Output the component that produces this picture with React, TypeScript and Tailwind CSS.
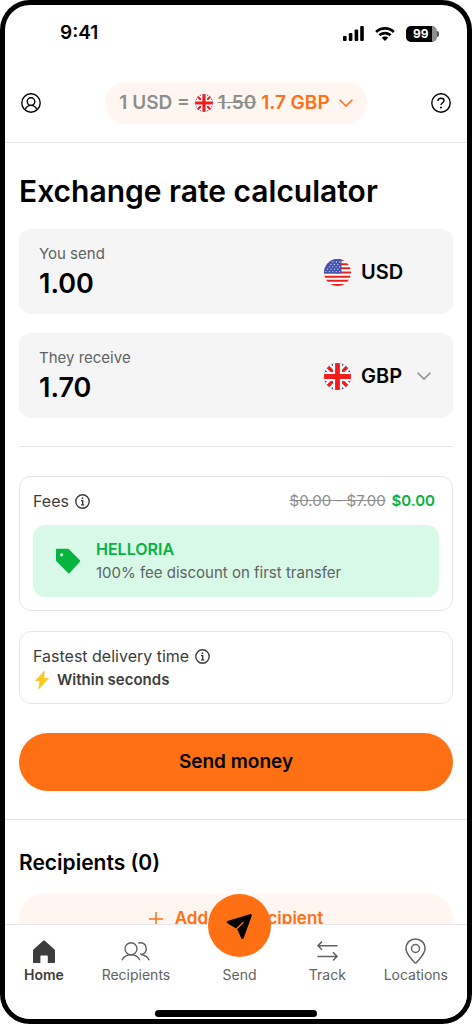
import type { ReactNode } from 'react';

type Flag = 'us' | 'gb';

const TABS = [
  { id: 'home', label: 'Home', icon: <HomeIcon /> },
  { id: 'recipients', label: 'Recipients', icon: <PeopleIcon /> },
  { id: 'send', label: 'Send', icon: null },
  { id: 'track', label: 'Track', icon: <TrackIcon /> },
  { id: 'locations', label: 'Locations', icon: <PinIcon /> },
];

export default function App() {
  return (
    <div className="flex h-screen flex-col overflow-hidden rounded-[30px] border-[5px] border-black bg-white font-['Inter',sans-serif] text-black">
      <StatusBar />
      <Header />
      <main className="min-h-0 flex-1 overflow-y-auto [scrollbar-width:none]">
        <section className="px-3.5 pt-7 pb-7">
          <h1 className="text-[30px] leading-10 font-semibold">Exchange rate calculator</h1>

          <div className="mt-[18px] flex flex-col gap-[19px]">
            <AmountCard id="send" label="You send" value="1.00" flag="us">
              <span className="text-xl font-semibold">USD</span>
            </AmountCard>
            <AmountCard id="receive" label="They receive" value="1.70" flag="gb">
              <div className="relative flex-1">
                <select
                  aria-label="Receive currency"
                  className="w-full appearance-none bg-transparent text-xl font-semibold outline-none"
                >
                  <option>GBP</option>
                </select>
                <Chevron className="pointer-events-none absolute top-1/2 right-0 h-2 w-3.5 -translate-y-1/2 text-[#8c8c8c]" />
              </div>
            </AmountCard>
          </div>

          <hr className="mt-7 mb-[29px] border-[#e6e6e6]" />

          <div className="rounded-xl border border-[#e6e6e6] px-[13px] pt-3 pb-[13px]">
            <div className="flex items-center justify-between pr-1">
              <span className="flex items-center gap-1.5 text-base text-[#3d3d3d]">
                Fees <InfoIcon />
              </span>
              <span className="flex gap-1.5 text-[15px] leading-6">
                <s className="text-[#8c8f8e]">$0.00 - $7.00</s>
                <span className="font-semibold text-[#06b341]">$0.00</span>
              </span>
            </div>
            <div className="mt-3 flex items-center gap-[15px] rounded-xl bg-[#d8f8e8] px-[22px] py-[13px]">
              <TagIcon />
              <div className="text-[15px] leading-[23px] text-[#5f6361]">
                <div className="text-base leading-[23px] font-semibold text-[#06b341]">HELLORIA</div>
                <div>100% fee discount on first transfer</div>
              </div>
            </div>
          </div>

          <div className="mt-5 rounded-xl border border-[#e6e6e6] px-[13px] pt-3 pb-[11px] text-[#3d3d3d]">
            <div className="flex items-center gap-1.5 text-base">
              Fastest delivery time <InfoIcon />
            </div>
            <div className="flex items-center gap-1.5 text-[15px] leading-6 font-semibold">
              <BoltIcon /> Within seconds
            </div>
          </div>

          <button type="button" className="mt-[29px] h-[58px] w-full rounded-full bg-[#ff6f14] text-[19px] font-semibold">
            Send money
          </button>
        </section>

        <section className="border-t border-[#e6e6e6] px-3.5 pt-7">
          <h2 className="text-[21px] leading-[30px] font-semibold">Recipients (0)</h2>
          <button
            type="button"
            className="mt-4 flex h-[50px] w-full items-center justify-center gap-3 rounded-full bg-[#fff6f1] text-[17px] font-semibold text-[#ff6f14]"
          >
            <svg viewBox="0 0 14 14" className="size-3.5" fill="none" stroke="currentColor" strokeWidth="1.5">
              <path d="M7 0v14M0 7h14" />
            </svg>
            Add new recipient
          </button>
        </section>
      </main>
      <TabBar />
    </div>
  );
}

function StatusBar() {
  return (
    <div className="flex h-[57px] items-center justify-between pr-7 pl-[55px]">
      <span className="text-[19px] font-semibold">9:41</span>
      <div className="flex items-center gap-[11px]">
        <svg viewBox="0 0 21 15" className="h-[15px] w-[21px]">
          <rect x="0" y="10" width="3.6" height="5" rx="1" />
          <rect x="5.8" y="7" width="3.6" height="8" rx="1" />
          <rect x="11.6" y="3.4" width="3.6" height="11.6" rx="1" />
          <rect x="17.2" y="0" width="3.6" height="15" rx="1" />
        </svg>
        <svg viewBox="0 0 20 14" className="h-3.5 w-5">
          <path d="M10 0C6.2 0 2.7 1.500.2 3.900l1.900 2C4.200 4 7 2.800 10 2.800s5.800 1.200 7.900 3.100l1.900-2C17.300 1.500 13.800 0 10 0z" />
          <path d="M10 4.800c-2.500 0-4.800 1-6.500 2.500l1.900 2C6.600 8.200 8.200 7.500 10 7.500s3.400.7 4.600 1.800l1.900-2C14.800 5.800 12.500 4.800 10 4.800z" />
          <path d="M10 9.400c-1.300 0-2.400.5-3.200 1.300L10 14l3.200-3.300c-.8-.8-1.900-1.300-3.200-1.300z" />
        </svg>
        <div className="flex items-center">
          <span className="flex h-4 w-[31px] items-center rounded-[5px] border-r-[5px] border-[#8f8f8f] bg-black pl-[7px] text-[12px] leading-none font-bold text-white">
            99
          </span>
          <span className="h-1.5 w-0.5 rounded-r-full bg-[#555]" />
        </div>
      </div>
    </div>
  );
}

function Header() {
  return (
    <header className="flex items-center justify-between border-b border-[#e6e6e6] px-4 pt-5 pb-[18px]">
      <button type="button" aria-label="Profile">
        <svg viewBox="0 0 20 20" className="size-5" fill="none" stroke="currentColor" strokeWidth="1.4">
          <circle cx="10" cy="10" r="9.2" />
          <circle cx="10" cy="8.6" r="3.8" />
          <path d="M4.200 16.600c1-2.600 3-4.200 5.800-4.200s4.800 1.600 5.800 4.200" />
        </svg>
      </button>
      <button
        type="button"
        className="flex h-[42px] items-center gap-[5px] rounded-full bg-[#fff6f1] px-3.5 text-[19px] font-semibold text-[#8c8f8e]"
      >
        1 USD =
        <FlagIcon flag="gb" className="size-[18px]" />
        <s>1.50</s>
        <span className="text-[#ff6f14]">1.7 GBP</span>
        <Chevron className="ml-1 h-2 w-3.5 text-[#ff6f14]" />
      </button>
      <button type="button" aria-label="Help">
        <svg viewBox="0 0 20 20" className="size-5" fill="none" stroke="currentColor" strokeWidth="1.4">
          <circle cx="10" cy="10" r="9.2" />
          <path d="M7 8c0-1.800 1.300-2.800 3-2.800s3 1 3 2.600c0 2-3 2-3 4.300" />
          <circle cx="10" cy="14.6" r="1" fill="currentColor" stroke="none" />
        </svg>
      </button>
    </header>
  );
}

function AmountCard({
  id,
  label,
  value,
  flag,
  children,
}: {
  id: string;
  label: string;
  value: string;
  flag: Flag;
  children: ReactNode;
}) {
  return (
    <div className="flex items-center justify-between rounded-xl bg-[#f5f5f5] pt-[13px] pr-[22px] pb-3 pl-5">
      <div className="flex min-w-0 flex-1 flex-col">
        <label htmlFor={id} className="text-[15px] leading-6 text-[#5f6361]">
          {label}
        </label>
        <input
          id={id}
          defaultValue={value}
          inputMode="decimal"
          className="h-9 w-full bg-transparent text-[27px] leading-9 font-semibold outline-none"
        />
      </div>
      <div className="flex w-[107px] items-center gap-2.5">
        <FlagIcon flag={flag} className="size-[27px] shrink-0" />
        {children}
      </div>
    </div>
  );
}

function TabBar() {
  return (
    <nav className="border-t border-[#e6e6e6] bg-white">
      <div className="flex justify-between px-[19px] pt-3">
        {TABS.map((t) =>
          t.id === 'send' ? (
            <a key={t.id} href="#send" className="relative flex w-[63px] flex-col items-center pt-7 text-sm text-[#5f6361]">
              <span className="absolute -top-[43px] flex size-[63px] items-center justify-center rounded-full bg-[#ff6f14] text-black">
                <PlaneIcon />
              </span>
              {t.label}
            </a>
          ) : (
            <a
              key={t.id}
              href={`#${t.id}`}
              className={`flex flex-col items-center text-sm ${
                t.id === 'home' ? 'font-semibold text-[#3d3d3d]' : 'text-[#5f6361]'
              }`}
            >
              <span className="flex h-7 items-center">{t.icon}</span>
              {t.label}
            </a>
          ),
        )}
      </div>
      <div className="mx-auto mt-[25px] mb-0.5 h-[7px] w-[162px] rounded-full bg-black" />
    </nav>
  );
}

function Chevron({ className }: { className: string }) {
  return (
    <svg viewBox="0 0 14 8" className={className} fill="none" stroke="currentColor" strokeWidth="1.6">
      <path d="M.6.7 7 7 13.400.7" />
    </svg>
  );
}

function InfoIcon() {
  return (
    <svg viewBox="0 0 15 15" className="size-[15px]" fill="none" stroke="currentColor" strokeWidth="1.4">
      <circle cx="7.5" cy="7.5" r="6.7" />
      <path d="M6 6.600h1.700v4.200M6 10.900h3.200" />
      <circle cx="7.4" cy="4.2" r=".9" fill="currentColor" stroke="none" />
    </svg>
  );
}

function TagIcon() {
  return (
    <svg viewBox="0 0 26 26" className="size-[26px] shrink-0 text-[#06b341]" fill="currentColor">
      <path
        fillRule="evenodd"
        d="M2 .8h10.600c.5 0 .9.200 1.300.5l11 11c.5.500.5 1 0 1.500L14.700 24.900c-.6.500-1.100.500-1.600 0L1.600 13.600c-.4-.4-.6-.8-.6-1.300V1.800c0-.6.400-1 1-1zM6.600 5.200a1.600 1.600 0 1 0 0 3.200 1.600 1.600 0 0 0 0-3.200z"
      />
    </svg>
  );
}

function BoltIcon() {
  return (
    <svg viewBox="0 0 18 20" className="h-5 w-[18px]">
      <path
        d="M11.500 1 2.500 10.700h4.600L5.600 19l10-10.700h-4.900z"
        fill="#ffcc12"
        stroke="#f5b93a"
        strokeWidth=".6"
        strokeLinejoin="round"
      />
    </svg>
  );
}

function HomeIcon() {
  return (
    <svg viewBox="0 0 22 23" className="h-[23px] w-[22px]" fill="currentColor">
      <path d="M10.200.8c.5-.4 1.100-.4 1.600 0l9.500 8.400c.5.400.7.900.7 1.500V22c0 .6-.3.900-.9.900h-6.300v-6.700c0-.5-.3-.8-.8-.8H8.200c-.5 0-.8.300-.8.800v6.700H.9c-.6 0-.9-.3-.9-.9V10.700c0-.6.200-1.100.7-1.500z" />
    </svg>
  );
}

function PeopleIcon() {
  return (
    <svg viewBox="0 0 29 19" className="h-[19px] w-[29px]" fill="none" stroke="currentColor" strokeWidth="1.4">
      <circle cx="10" cy="6.8" r="6" />
      <path d="M1 18.200c1.600-3.200 4.900-5.400 9-5.400s7.300 2.200 8.900 5.400" />
      <path d="M17 1.100c.8-.2 1.500-.3 2.300-.3a6 6 0 0 1 2.500 11.400h-2.500c4.300.6 7.400 2.600 8.900 6" />
    </svg>
  );
}

function TrackIcon() {
  return (
    <svg viewBox="0 0 21 20" className="h-5 w-[21px]" fill="none" stroke="currentColor" strokeWidth="1.5">
      <path d="M20.500 4.700H1M5 .6.900 4.700 5 8.800M.5 15.400H20M16 11.300l4.100 4.100-4.100 4.100" />
    </svg>
  );
}

function PinIcon() {
  return (
    <svg viewBox="0 0 21 26" className="h-[26px] w-[21px]" fill="none" stroke="currentColor" strokeWidth="1.5">
      <path d="M10.500.9C5.200.9.900 5 .9 10.300c0 5.700 4.800 9.600 8.600 14.200.6.700 1.400.7 2 0 3.800-4.600 8.600-8.500 8.600-14.200C20.100 5 15.800.9 10.500.9z" />
      <circle cx="10.5" cy="10.5" r="4" />
    </svg>
  );
}

function PlaneIcon() {
  return (
    <svg viewBox="0 0 28 28" className="size-7">
      <path
        fill="currentColor"
        d="M24.400 2.100 1.600 8.900c-1.100.4-1.200 1.800-.2 2.300l8.300 5.100 1.900 1.700 3.800 8.400c.5 1 1.800.9 2.200-.1l8.200-22.500c.3-1.100-.4-2-1.400-1.700z"
      />
      <path stroke="#ff6f14" strokeWidth="1.500" d="m8.800 18.500 8.700-8.200" />
    </svg>
  );
}

function FlagIcon({ flag, className }: { flag: Flag; className: string }) {
  if (flag === 'us') {
    return (
      <svg viewBox="0 0 27 27" className={className}>
        <clipPath id="us-round">
          <circle cx="13.5" cy="13.5" r="13.5" />
        </clipPath>
        <g clipPath="url(#us-round)">
          <path fill="#fff" d="M0 0h27v27H0z" />
          <path
            stroke="#f31c1c"
            strokeWidth="2.1"
            d="M0 1h27M0 5.200h27M0 9.300h27M0 13.500h27M0 17.700h27M0 21.800h27M0 26h27"
          />
          <path fill="#4254ab" d="M0 0h17.500v14.500H0z" />
          <path
            stroke="#d9dcf0"
            strokeWidth="1.3"
            strokeLinecap="round"
            strokeDasharray="0 3.4"
            d="M9 3h9M7 5.400h10M5.300 7.800h12M3.600 10.200h13M2 12.600h15"
          />
        </g>
      </svg>
    );
  }
  return (
    <svg viewBox="0 0 27 27" className={className}>
      <clipPath id="gb-round">
        <circle cx="13.5" cy="13.5" r="13.5" />
      </clipPath>
      <g clipPath="url(#gb-round)">
        <path fill="#4254ab" d="M0 0h27v27H0z" />
        <path stroke="#fff" strokeWidth="8" d="m0 0 27 27M27 0 0 27" />
        <path stroke="#f31c1c" strokeWidth="3.4" d="m0 0 27 27M27 0 0 27" />
        <path stroke="#fff" strokeWidth="9" d="M13.500 0v27M0 13.500h27" />
        <path stroke="#f31c1c" strokeWidth="4.8" d="M13.500 0v27M0 13.500h27" />
      </g>
    </svg>
  );
}
